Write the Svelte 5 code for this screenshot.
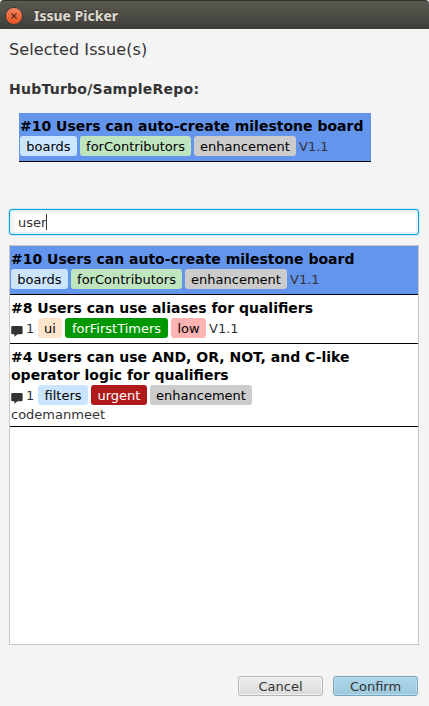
<script>
  const boards = { name: 'boards', bg: '#cce5ff', width: 57 };
  const contributors = { name: 'forContributors', bg: '#bfe5bf', width: 111 };
  const enhancement = { name: 'enhancement', bg: '#cccccc', width: 102 };

  const users = {
    title: ['#10 Users can auto-create milestone board'],
    labels: [boards, contributors, enhancement],
    milestone: 'V1.1',
    selected: true
  };

  const issues = [
    users,
    {
      title: ['#8 Users can use aliases for qualifiers'],
      comments: 1,
      labels: [
        { name: 'ui', bg: '#fee5cc', width: 24 },
        { name: 'forFirstTimers', bg: '#009800', fg: '#ffffff', width: 103 },
        { name: 'low', bg: '#ffb3b3', width: 35 }
      ],
      milestone: 'V1.1'
    },
    {
      title: ['#4 Users can use AND, OR, NOT, and C-like', 'operator logic for qualifiers'],
      comments: 1,
      labels: [
        { name: 'filters', bg: '#cce5ff', width: 50 },
        { name: 'urgent', bg: '#b11a1a', fg: '#ffffff', width: 56 },
        enhancement
      ],
      assignee: 'codemanmeet'
    }
  ];

  let query = $state('user');
</script>

{#snippet card(issue)}
  <article class="card" class:selected={issue.selected}>
    <div class="title">
      {#each issue.title as line}<div>{line}</div>{/each}
    </div>
    <div class="meta">
      {#if issue.comments}
        <span class="comments">
          <svg width="12" height="11" viewBox="0 0 12 11"><path d="M1.5 0H10.3Q11.6 0 11.6 1.2V6.9Q11.6 8.2 10.3 8.2H6.6L3.4 10.8V8.2H1.5Q.2 8.2 .2 6.9V1.2Q.2 0 1.5 0Z" fill="#333" /></svg>
          <span>{issue.comments}</span>
        </span>
      {/if}
      {#each issue.labels as label}
        <span class="label" style="background: {label.bg}; color: {label.fg ?? '#000'}; width: {label.width}px">{label.name}</span>
      {/each}
      {#if issue.milestone}<span>{issue.milestone}</span>{/if}
    </div>
    {#if issue.assignee}<div class="assignee">{issue.assignee}</div>{/if}
  </article>
{/snippet}

<div class="window">
  <header>
    <button class="close" aria-label="Close">
      <svg width="16" height="16" viewBox="0 0 16 16"><path d="M5.5 5.5L10.5 10.5M10.5 5.5L5.5 10.5" stroke="#5a2a1a" stroke-width="1.1" /></svg>
    </button>
    <span class="caption">Issue Picker</span>
  </header>
  <main>
    <div class="heading">Selected Issue(s)</div>
    <div class="repo">HubTurbo/SampleRepo:</div>
    <div class="chosen">{@render card(users)}</div>
    <div class="field"><span>{query}</span><i class="caret"></i></div>
    <div class="list">
      {#each issues as issue}{@render card(issue)}{/each}
    </div>
    <footer>
      <button class="btn">Cancel</button>
      <button class="btn primary">Confirm</button>
    </footer>
  </main>
</div>

<style>
  .window {
    width: 429px;
    height: 706px;
    box-sizing: border-box;
    overflow: hidden;
    display: flex;
    flex-direction: column;
    background: #f4f4f4;
    font: 13px 'DejaVu Sans', sans-serif;
    color: #333;
  }
  header {
    height: 29px;
    flex: none;
    box-sizing: border-box;
    display: flex;
    align-items: center;
    gap: 12px;
    padding: 2px 6px 0;
    border-top: 1px solid #33322d;
    border-radius: 4px 4px 0 0;
    background: linear-gradient(#5b5a51, #3e3d38);
  }
  .close {
    width: 16px;
    height: 16px;
    padding: 0;
    border: 0;
    border-radius: 50%;
    background: linear-gradient(#f58560, #e5501f);
    box-shadow: 0 0 0 1px #3b3833;
    display: flex;
  }
  .caption {
    font: bold 14px/20px 'Noto Sans', sans-serif;
    color: #dfdbd2;
    text-shadow: 0 -1px 0 #33322d;
  }
  main {
    flex: 1;
    display: flex;
    flex-direction: column;
    padding: 0 10px 0 9px;
  }
  .heading {
    margin-top: 11px;
    height: 20px;
    font-size: 16px;
    line-height: 20px;
    letter-spacing: 0.1px;
  }
  .repo {
    margin-top: 19px;
    height: 20px;
    font-size: 14px;
    line-height: 20px;
    font-weight: bold;
    letter-spacing: 0.25px;
  }
  .chosen {
    width: 352px;
    margin: 14px 0 0 10px;
  }
  .card {
    padding: 4px 1px 5px;
    border-bottom: 1px solid #000;
  }
  .selected {
    background: #6495ed;
  }
  .title {
    margin-bottom: 1px;
    font-size: 14px;
    line-height: 18px;
    font-weight: bold;
    color: #000;
    white-space: nowrap;
  }
  .meta {
    display: flex;
    gap: 3px;
    height: 20px;
    line-height: 22px;
  }
  .comments {
    display: flex;
    width: 24px;
    gap: 3px;
  }
  .comments svg {
    margin-top: 8px;
  }
  .label {
    height: 20px;
    border-radius: 3px;
    text-align: center;
    white-space: nowrap;
  }
  .assignee {
    height: 16px;
    line-height: 20px;
  }
  .field {
    box-sizing: border-box;
    width: 410px;
    height: 26px;
    margin-top: 47px;
    padding: 0 8px;
    display: flex;
    align-items: center;
    background: #fff;
    border: 1px solid #039ed3;
    border-radius: 3px;
    box-shadow: 0 0 0 1px #cdeaf4, inset 0 0 0 2px #e0f3f9;
  }
  .caret {
    width: 1px;
    height: 16px;
    background: #333;
  }
  .list {
    box-sizing: border-box;
    width: 410px;
    height: 400px;
    margin-top: 10px;
    background: #fff;
    border: 1px solid #c8c8c8;
  }
  footer {
    display: flex;
    justify-content: flex-end;
    gap: 10px;
    margin-top: 31px;
    padding-right: 1px;
  }
  .btn {
    width: 85px;
    height: 20px;
    padding: 2px 0 0;
    font: 13px/16px 'DejaVu Sans', sans-serif;
    color: #333;
    border: 1px solid #b5b5b5;
    border-radius: 3px;
    background: linear-gradient(#ececec, #dadada);
    box-shadow: inset 0 0 0 1px #f3f3f3;
  }
  .primary {
    border-color: #78a5b8;
    background: linear-gradient(#aed8ea, #9bc8dc);
    box-shadow: inset 0 0 0 1px #b9dfee;
  }
</style>
